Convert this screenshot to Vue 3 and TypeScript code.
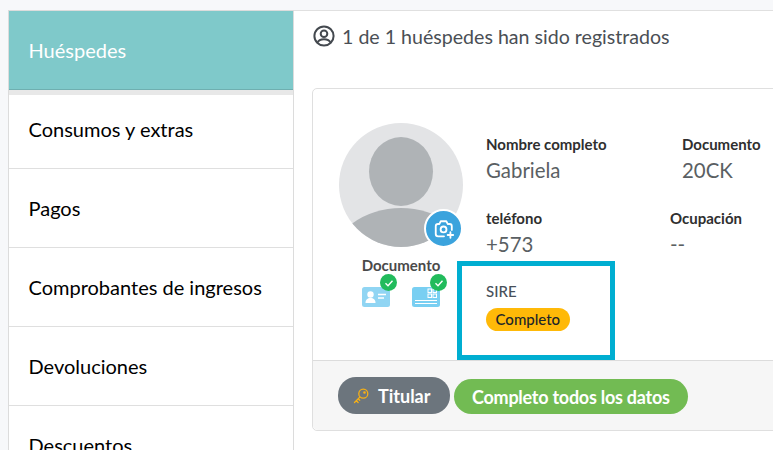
<template>
  <div class="page">
    <nav class="side">
      <div v-for="(item, i) in menu" :key="item" class="side-item" :class="{ active: i === 0 }">{{ item }}</div>
    </nav>
    <main class="main">
      <div class="count">
        <svg class="count-icon" viewBox="0 0 22 22" width="22" height="22" fill="none" stroke="#44494f" stroke-width="2">
          <circle cx="11" cy="11" r="9.6" />
          <circle cx="11" cy="8.8" r="3.3" />
          <path d="M4.6 17.5c1-2.6 3.4-3.3 6.4-3.3s5.4.7 6.4 3.3" />
        </svg>
        <span>1 de 1 huéspedes han sido registrados</span>
      </div>
      <section class="card">
        <div class="card-body">
          <div class="left">
            <div class="avatar">
              <svg viewBox="0 0 124 124" width="124" height="124">
                <defs>
                  <clipPath id="av"><circle cx="62" cy="62" r="62" /></clipPath>
                </defs>
                <circle cx="62" cy="62" r="62" fill="#e3e4e6" />
                <g clip-path="url(#av)" fill="#afb3b6">
                  <ellipse cx="62" cy="48.500" rx="32" ry="34.500" />
                  <ellipse cx="62" cy="136" rx="68" ry="51" />
                </g>
              </svg>
              <span class="cam">
                <svg viewBox="0 0 24 24" width="22" height="22" fill="none" stroke="#fff" stroke-width="2" stroke-linejoin="round" stroke-linecap="round">
                  <path d="M12 20H5.500A2.500 2.500 0 0 1 3 17.500V9a2.500 2.500 0 0 1 2.500-2.500H7L8.500 3.500h6L16 6.500h2A2.500 2.500 0 0 1 20.500 9v4" />
                  <circle cx="11.500" cy="12.500" r="3.200" />
                  <path d="M19 15.500v6M16 18.500h6" />
                </svg>
              </span>
            </div>
            <div class="doc-title">Documento</div>
            <div class="doc-icons">
              <span class="doc">
                <svg viewBox="0 0 28 20" width="28" height="20">
                  <rect width="28" height="20" rx="2.500" fill="#90d5f3" />
                  <circle cx="8.500" cy="7.500" r="3.200" fill="#fff" />
                  <path d="M3.500 16c0-3.500 2-5 5-5s5 1.500 5 5z" fill="#fff" />
                  <path d="M16 7.500h8M16 11h6" stroke="#fff" stroke-width="1.500" />
                </svg>
                <span class="check"><svg viewBox="0 0 16 16" width="16" height="16" fill="none" stroke="#fff" stroke-width="1.400"><path d="M4.500 8.300l2.500 2.400 4.500-5" /></svg></span>
              </span>
              <span class="doc">
                <svg viewBox="0 0 28 20" width="28" height="20">
                  <rect width="28" height="20" rx="2.500" fill="#79cff2" />
                  <g fill="none" stroke="#fff" stroke-width="1">
                    <rect x="16" y="2" width="3.500" height="3.500" />
                    <rect x="21" y="2" width="3.500" height="3.500" />
                    <rect x="16" y="7" width="3.500" height="3.500" />
                    <rect x="21" y="7" width="3.500" height="3.500" />
                  </g>
                  <path d="M3 13.500h22M3 16.500h22" stroke="#fff" stroke-width="1.200" />
                </svg>
                <span class="check"><svg viewBox="0 0 16 16" width="16" height="16" fill="none" stroke="#fff" stroke-width="1.400"><path d="M4.500 8.300l2.500 2.400 4.500-5" /></svg></span>
              </span>
            </div>
          </div>
          <div class="info">
            <div class="row row-name">
              <div class="field f-name">
                <div class="label">Nombre completo</div>
                <div class="value">Gabriela</div>
              </div>
              <div class="field">
                <div class="label">Documento</div>
                <div class="value">20CK</div>
              </div>
            </div>
            <div class="row row-phone">
              <div class="field f-phone">
                <div class="label">teléfono</div>
                <div class="value">+573</div>
              </div>
              <div class="field">
                <div class="label">Ocupación</div>
                <div class="value">--</div>
              </div>
            </div>
            <div class="sire">
              <div class="sire-label">SIRE</div>
              <span class="sire-badge">Completo</span>
            </div>
          </div>
        </div>
        <footer class="card-foot">
          <span class="pill pill-gray">
            <svg viewBox="0 0 16 16" width="16" height="16" fill="none" stroke="#f7b015" stroke-width="1.300" stroke-linecap="round" stroke-linejoin="round">
              <circle cx="10.300" cy="5.700" r="4.500" />
              <circle cx="11.500" cy="4.500" r=".7" />
              <path d="M7 8.900 1.500 14.500M3.300 12.700l1.800 1.800M5.200 10.800l1.500 1.500" />
            </svg>
            Titular
          </span>
          <span class="pill pill-green">Completo todos los datos</span>
        </footer>
      </section>
    </main>
  </div>
</template>

<script setup lang="ts">
const menu: string[] = [
  'Huéspedes',
  'Consumos y extras',
  'Pagos',
  'Comprobantes de ingresos',
  'Devoluciones',
  'Descuentos',
]
</script>

<style>
html,
body {
  margin: 0;
  overflow: hidden;
}
</style>

<style scoped>
.page {
  width: 773px;
  height: 450px;
  overflow: hidden;
  box-sizing: border-box;
  padding: 10px 0 0 8px;
  display: flex;
  align-items: flex-start;
  background: #f7f8fa;
  font-family: Lato, sans-serif;
  color: #000;
}

.side {
  width: 286px;
  flex: none;
  box-sizing: border-box;
  background: #fff;
  border: 1px solid #dcdcdc;
  border-bottom: 0;
}

.side-item {
  height: 78px;
  padding-left: 19.5px;
  display: flex;
  align-items: center;
  font-size: 20px;
  border-bottom: 1px solid #dfdfdf;
}

.side-item.active {
  color: #fff;
  background: #7fc9ca;
  border-bottom: 1px solid #6fafb0;
  box-shadow: 0 5px 0 #e8e8e8;
}

.main {
  flex: 1;
  height: 440px;
  min-width: 0;
  box-sizing: border-box;
  padding: 0 0 0 18px;
  background: #fff;
  border-top: 1px solid #e0e0e0;
}

.count {
  height: 50px;
  display: flex;
  align-items: center;
  gap: 7px;
  margin-left: 1px;
  font-size: 19.6px;
  color: #4a4f55;
}

.count-icon {
  flex: none;
}

.card {
  width: 600px;
  margin-top: 27px;
  box-sizing: border-box;
  border: 1px solid #dfdfdf;
  border-radius: 5px;
  background: #fff;
}

.card-body {
  height: 271px;
  display: flex;
  box-sizing: border-box;
  padding-top: 34px;
}

.left {
  width: 124px;
  flex: none;
  margin-left: 26px;
}

.avatar {
  position: relative;
  width: 124px;
  height: 124px;
}

.avatar > svg {
  display: block;
}

.cam {
  position: absolute;
  left: 85px;
  top: 86px;
  width: 35px;
  height: 35px;
  border-radius: 50%;
  background: #3ba3dd;
  border: 2px solid #fff;
  display: flex;
  align-items: center;
  justify-content: center;
}

.doc-title {
  margin-top: 9px;
  text-align: center;
  font-size: 15px;
  font-weight: 700;
  color: #4a4a4a;
  line-height: 18px;
}

.doc-icons {
  display: flex;
  justify-content: space-between;
  padding: 13px 23px 0;
}

.doc {
  position: relative;
  display: block;
  width: 28px;
  height: 20px;
}

.doc > svg {
  display: block;
}

.check {
  position: absolute;
  left: 18px;
  top: -13px;
  width: 17px;
  height: 17px;
  border-radius: 50%;
  background: #22bb5c;
  display: flex;
  align-items: center;
  justify-content: center;
}

.info {
  flex: 1;
  min-width: 0;
  padding-top: 11px;
}

.row {
  display: flex;
  margin-left: 23px;
  height: 74px;
}

.row-phone {
  height: 53px;
}

.f-name {
  width: 196px;
}

.f-phone {
  width: 184px;
}

.label {
  font-size: 15px;
  font-weight: 700;
  line-height: 20px;
  color: #2f2f2f;
}

.value {
  margin-top: 3px;
  font-size: 20.4px;
  line-height: 26px;
  color: #5a5f63;
}

.sire {
  width: 158px;
  height: 99px;
  margin-left: -6px;
  box-sizing: border-box;
  border: 5px solid #00aed1;
  padding: 15px 0 0 24px;
  position: relative;
}

.sire-label {
  font-size: 15px;
  font-weight: 500;
  line-height: 20px;
  color: #47505a;
}

.sire-badge {
  display: inline-block;
  margin-top: 7px;
  height: 23px;
  line-height: 23px;
  padding: 0 9.5px;
  border-radius: 12px;
  background: #ffb908;
  color: #212529;
  font-size: 15px;
  font-weight: 500;
}

.card-foot {
  height: 70px;
  box-sizing: border-box;
  border-top: 1px solid #dcdcdc;
  background: #f6f6f6;
  border-radius: 0 0 5px 5px;
  display: flex;
  align-items: center;
  padding: 0 0 0 25px;
  gap: 4px;
}

.pill {
  display: inline-flex;
  align-items: center;
  color: #fff;
  font-weight: 700;
  font-size: 18px;
  border-radius: 18px;
}

.pill-gray {
  width: 112px;
  height: 37px;
  box-sizing: border-box;
  padding-left: 15px;
  gap: 9px;
  background: #6c757d;
}

.pill-green {
  height: 35px;
  margin-top: 2px;
  padding: 0 18px;
  background: #72bb53;
  letter-spacing: -0.25px;
}
</style>
